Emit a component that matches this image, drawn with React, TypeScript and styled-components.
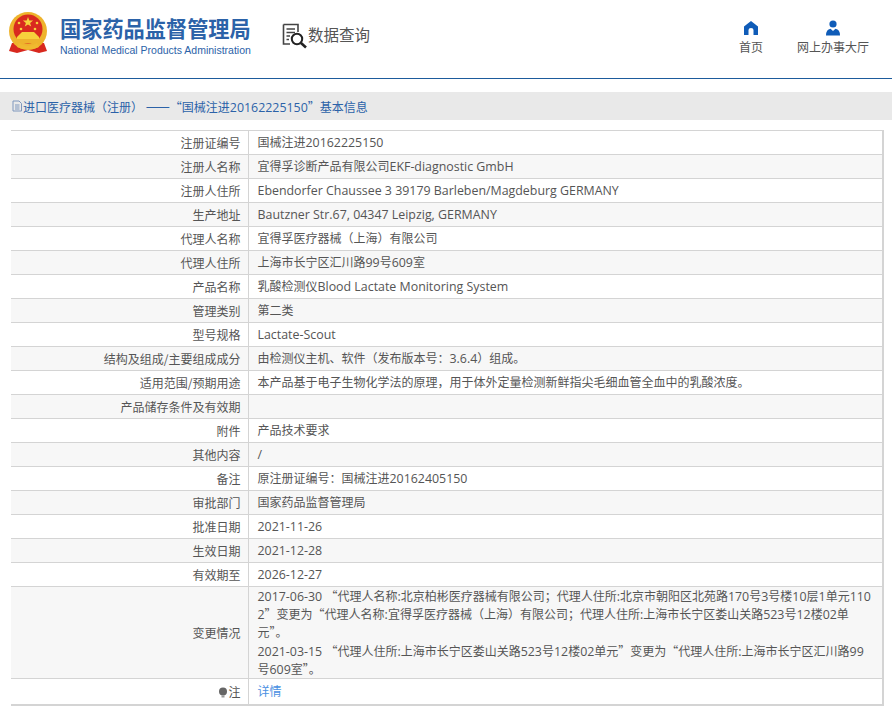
import React, { FC } from "react";
import styled, { createGlobalStyle } from "styled-components";

const Global = createGlobalStyle`
  html, body {
    margin: 0;
    padding: 0;
    background: #fff;
    font-family: "Noto Sans CJK SC", sans-serif;
    font-size: 12px;
    color: #555;
  }
`;

const Page = styled.div`
  width: 892px;
`;

const Header = styled.header`
  height: 78px;
  display: flex;
  align-items: flex-start;
  border-bottom: 1px solid #1d5b9c;
`;

const Emblem = styled.svg`
  width: 40px;
  height: 42px;
  margin: 12px 0 0 8px;
`;

const Brand = styled.div`
  margin: 14px 0 0 12px;
  width: 192px;
`;

const BrandName = styled.div`
  font-size: 21.2px;
  line-height: 28px;
  font-weight: 700;
  color: #2b62a8;
  white-space: nowrap;
`;

const BrandEn = styled.div`
  font-family: "Liberation Sans", sans-serif;
  font-size: 10.5px;
  line-height: 14px;
  margin-top: 1px;
  color: #2b62a8;
  white-space: nowrap;
`;

const QueryIcon = styled.svg`
  width: 26px;
  height: 26px;
  margin: 23px 0 0 30px;
`;

const QueryText = styled.div`
  font-size: 15.5px;
  line-height: 24px;
  margin: 22px 0 0 0;
  color: #555;
`;

const Nav = styled.nav`
  margin-left: auto;
  display: flex;
  padding-right: 1px;
`;

const NavItem = styled.a<{ $width: number }>`
  width: ${(p) => p.$width}px;
  display: flex;
  flex-direction: column;
  align-items: center;
  margin-top: 20px;
  font-size: 12px;
  line-height: 18px;
  color: #555;

  svg {
    width: 16px;
    height: 16px;
    margin-bottom: 2px;
  }
`;

const Title = styled.div`
  margin-top: 13px;
  height: 28px;
  display: flex;
  align-items: center;
  padding-left: 11px;
  background: #e9e9e9;
  color: #2b62a8;
  font-size: 12px;
  white-space: pre;

  svg {
    width: 12px;
    height: 12px;
    flex: none;
  }
`;

const Dash = styled.span`
  font-size: 14.4px;
  line-height: 1;
`;

const Sheet = styled.table`
  width: 873px;
  margin: 10px 0 0 11px;
  border-collapse: collapse;
  table-layout: fixed;
  border-right: 2px solid #d4d4d4;
  border-top: 1px solid #d4d4d4;
  border-bottom: 2px solid #d4d4d4;
`;

const Row = styled.tr<{ $shade: boolean }>`
  background: ${(p) => (p.$shade ? "#f7f7f7" : "#fff")};
  border-bottom: 1px solid #d4d4d4;
  &:last-child {
    border-bottom: none;
  }
`;

const Label = styled.td<{ $height?: number }>`
  width: 237px;
  height: ${(p) => p.$height ?? 24}px;
  padding: 0 7px 0 0;
  box-sizing: border-box;
  text-align: right;
  color: #555;
  border-right: 1px solid #d4d4d4;
`;

const Value = styled.td`
  padding: 0 7px 0 9px;
  color: #555;
  line-height: 18.2px;
`;

const ChangeLine = styled.div`
  height: 18.2px;
  white-space: nowrap;
`;

const Latin = styled.span`
  font-family: "Open Sans", sans-serif;
  font-size: 12.4px;
  line-height: 0;
`;

const Detail = styled.a`
  color: #4a90e2;
`;

const Bulb = styled.svg`
  width: 10px;
  height: 11px;
  vertical-align: -1px;
`;

const rows: [string, string][] = [
  ["注册证编号", "国械注进20162225150"],
  ["注册人名称", "宜得孚诊断产品有限公司EKF-diagnostic GmbH"],
  ["注册人住所", "Ebendorfer Chaussee 3 39179 Barleben/Magdeburg GERMANY"],
  ["生产地址", "Bautzner Str.67, 04347 Leipzig, GERMANY"],
  ["代理人名称", "宜得孚医疗器械（上海）有限公司"],
  ["代理人住所", "上海市长宁区汇川路99号609室"],
  ["产品名称", "乳酸检测仪Blood Lactate Monitoring System"],
  ["管理类别", "第二类"],
  ["型号规格", "Lactate-Scout"],
  ["结构及组成/主要组成成分", "由检测仪主机、软件（发布版本号：3.6.4）组成。"],
  ["适用范围/预期用途", "本产品基于电子生物化学法的原理，用于体外定量检测新鲜指尖毛细血管全血中的乳酸浓度。"],
  ["产品储存条件及有效期", ""],
  ["附件", "产品技术要求"],
  ["其他内容", "/"],
  ["备注", "原注册证编号：国械注进20162405150"],
  ["审批部门", "国家药品监督管理局"],
  ["批准日期", "2021-11-26"],
  ["生效日期", "2021-12-28"],
  ["有效期至", "2026-12-27"],
];

const changes = [
  "2017-06-30 “代理人名称:北京柏彬医疗器械有限公司；代理人住所:北京市朝阳区北苑路170号3号楼10层1单元110",
  "2”变更为“代理人名称:宜得孚医疗器械（上海）有限公司；代理人住所:上海市长宁区娄山关路523号12楼02单",
  "元”。",
  "2021-03-15 “代理人住所:上海市长宁区娄山关路523号12楼02单元”变更为“代理人住所:上海市长宁区汇川路99",
  "号609室”。",
];

// latin runs are set a little larger than the chinese around them
const Mixed: FC<{ text: string }> = ({ text }) => (
  <>
    {text.split(/([\x20-\x7e]+)/).map((part, i) =>
      i % 2 === 1 ? <Latin key={i}>{part}</Latin> : part
    )}
  </>
);

const App: FC = () => {
  return (
    <Page>
      <Global />
      <Header>
        <Emblem viewBox="0 0 40 42">
          <path d="M4 31 L1 39 L9 41 L20 38 L31 41 L39 39 L36 31 Z" fill="#d8281e" />
          <circle cx="20" cy="19" r="19" fill="#eeb32c" />
          <circle cx="20" cy="17" r="14.5" fill="#d92a1f" />
          <path d="M20 5l1.3 3.6h3.8l-3 2.3 1.1 3.6-3.2-2.1-3.2 2.1 1.1-3.6-3-2.3h3.8z" fill="#f7d23c" />
          <circle cx="11" cy="11" r="1.3" fill="#f7d23c" />
          <circle cx="29" cy="11" r="1.3" fill="#f7d23c" />
          <circle cx="13" cy="17" r="1.3" fill="#f7d23c" />
          <circle cx="27" cy="17" r="1.3" fill="#f7d23c" />
          <path d="M9 25 L14 20 H26 L31 25 V27 H9 Z" fill="#f7d23c" />
          <rect x="6" y="27" width="28" height="4" fill="#eeb32c" />
          <path d="M11 31 Q20 37 29 31 L31 35 Q20 40 9 35 Z" fill="#f0b92f" />
        </Emblem>
        <Brand>
          <BrandName>国家药品监督管理局</BrandName>
          <BrandEn>National Medical Products Administration</BrandEn>
        </Brand>
        <QueryIcon viewBox="0 0 26 26">
          <path d="M1.5 1.5H16V9M1.5 1.5V21H8" fill="none" stroke="#444" strokeWidth="1.6" />
          <path d="M4.5 6H13M4.5 9.5H13M4.5 13H8M4.5 16.5H7" stroke="#444" strokeWidth="1.3" />
          <circle cx="15" cy="16" r="5.2" fill="none" stroke="#222" strokeWidth="2" />
          <path d="M19 20l5 4.5" stroke="#222" strokeWidth="2.6" />
        </QueryIcon>
        <QueryText>数据查询</QueryText>
        <Nav>
          <NavItem $width={48}>
            <svg viewBox="0 0 16 16">
              <path d="M8 1 L15 6.5 V15 H10.5 V10 Q10.5 8 8 8 Q5.5 8 5.5 10 V15 H1 V6.5 Z" fill="#0f5cb8" />
            </svg>
            首页
          </NavItem>
          <NavItem $width={116}>
            <svg viewBox="0 0 16 16">
              <circle cx="8" cy="4" r="3.6" fill="#0f5cb8" />
              <path d="M1 15.5 Q1 9.5 5.5 8.8 L8 11 L10.5 8.8 Q15 9.5 15 15.5 Z" fill="#0f5cb8" />
            </svg>
            网上办事大厅
          </NavItem>
        </Nav>
      </Header>
      <Title>
        <svg viewBox="0 0 12 12">
          <path d="M2 1H8L10.5 3.5V11H2Z M4 5H8.5M4 7H8.5M4 9H8.5" fill="none" stroke="#7f97bd" strokeWidth="1" />
        </svg>
        <span>
          进口医疗器械（注册） <Dash>——</Dash>
          <Mixed text="“国械注进20162225150”基本信息" />
        </span>
      </Title>
      <Sheet>
        <tbody>
          {rows.map(([k, v], i) => (
            <Row key={k} $shade={i % 2 === 1}>
              <Label>{k}</Label>
              <Value>
                <Mixed text={v} />
              </Value>
            </Row>
          ))}
          <Row $shade>
            <Label $height={92}>变更情况</Label>
            <Value>
              {changes.map((c) => (
                <ChangeLine key={c}>
                  <Mixed text={c} />
                </ChangeLine>
              ))}
            </Value>
          </Row>
          <Row $shade={false}>
            <Label $height={26}>
              <Bulb viewBox="0 0 10 11">
                <circle cx="5" cy="4.5" r="4" fill="#666" />
                <rect x="3.5" y="8.5" width="3" height="2" fill="#999" />
              </Bulb>
              注
            </Label>
            <Value>
              <Detail>详情</Detail>
            </Value>
          </Row>
        </tbody>
      </Sheet>
    </Page>
  );
};

export default App;
